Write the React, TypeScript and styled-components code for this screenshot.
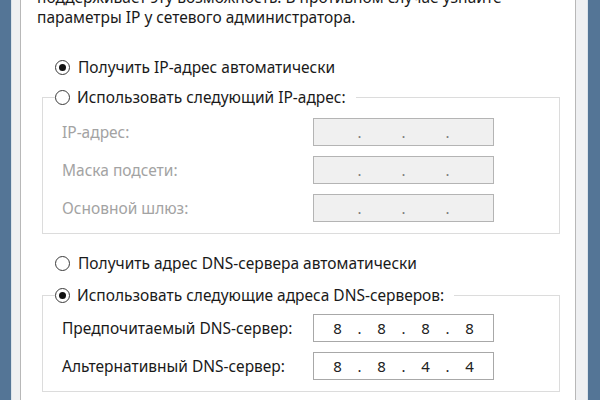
import React from "react";
import styled, { createGlobalStyle } from "styled-components";

const Global = createGlobalStyle`
  html, body { margin: 0; padding: 0; }
  body { font-family: "Noto Sans", "Open Sans", sans-serif; background: #547596; }
  * { box-sizing: border-box; }
`;

const Frame = styled.div`
  display: flex;
  width: 600px;
  height: 400px;
  overflow: hidden;
`;

const BlueEdge = styled.div<{ $w: number }>`
  width: ${(p) => p.$w}px;
  flex: none;
  background: #547596;
`;

const LightEdge = styled.div<{ $side: "left" | "right" }>`
  width: ${(p) => (p.$side === "left" ? 10 : 13)}px;
  flex: none;
  background: #eff0f2;
  ${(p) => (p.$side === "left" ? "border-right" : "border-left")}: 1px solid #b8b8b8;
  ${(p) => (p.$side === "left" ? "border-left" : "border-right")}: 1px solid #dbe3ea;
`;

const Panel = styled.div`
  flex: 1;
  background: #fff;
  padding: 0 15px 0 16px;
  display: flex;
  flex-direction: column;
  font-size: 15.5px;
  color: #1a1a1a;
`;

const Intro = styled.p`
  margin: -13px 0 0 0;
  line-height: 20px;
  white-space: nowrap;
`;

const RadioRow = styled.label<{ $mt: number }>`
  display: flex;
  align-items: center;
  gap: 8px;
  height: 18px;
  margin: ${(p) => p.$mt}px 0 0 18px;
  white-space: nowrap;
`;

const Radio = styled.span<{ $checked?: boolean }>`
  width: 15px;
  height: 15px;
  flex: none;
  border-radius: 50%;
  border: 1px solid #3a3a3a;
  background: #fff;
  display: flex;
  align-items: center;
  justify-content: center;
  &::after {
    content: "";
    width: 7px;
    height: 7px;
    border-radius: 50%;
    background: ${(p) => (p.$checked ? "#111" : "transparent")};
  }
`;

const Group = styled.fieldset<{ $mt: number; $pt: number }>`
  margin: ${(p) => p.$mt}px 0 0 5px;
  padding: ${(p) => p.$pt}px 0 11px 0;
  border: 1px solid #dcdcdc;
  display: flex;
  flex-direction: column;
  gap: 10px;
`;

const Legend = styled.legend`
  margin-left: 12px;
  padding: 0 10px 0 0;
  display: flex;
  align-items: center;
  gap: 7px;
  height: 18px;
  white-space: nowrap;
`;

const Row = styled.div<{ $disabled?: boolean }>`
  display: grid;
  grid-template-columns: 251px 181px;
  align-items: center;
  height: 28px;
  padding-left: 19px;
  color: ${(p) => (p.$disabled ? "#a3a3a3" : "#1a1a1a")};
`;

const IpBox = styled.div<{ $disabled?: boolean }>`
  height: 28px;
  border: 1px solid ${(p) => (p.$disabled ? "#b4b4b4" : "#a8a8a8")};
  background: ${(p) => (p.$disabled ? "#f0f0f0" : "#fff")};
  display: flex;
  align-items: center;
  justify-content: center;
  color: ${(p) => (p.$disabled ? "#7a7a7a" : "#222")};
  font-size: 15px;
`;

const Octet = styled.span`
  width: 36px;
  text-align: center;
`;

const Dot = styled.span`
  width: 8px;
  text-align: center;
`;

function Ip({ value, disabled }: { value?: string[]; disabled?: boolean }) {
  const parts = value ?? ["", "", "", ""];
  return (
    <IpBox $disabled={disabled}>
      {parts.map((p, i) => (
        <React.Fragment key={i}>
          {i > 0 && <Dot>.</Dot>}
          <Octet>{p}</Octet>
        </React.Fragment>
      ))}
    </IpBox>
  );
}

export default function App() {
  return (
    <>
      <Global />
      <Frame>
        <BlueEdge $w={11} />
        <LightEdge $side="left" />
        <Panel>
          <Intro>
            поддерживает эту возможность. В противном случае узнайте
            <br />
            параметры IP у сетевого администратора.
          </Intro>
          <RadioRow $mt={31}>
            <Radio $checked />
            Получить IP-адрес автоматически
          </RadioRow>
          <Group $mt={12} $pt={12}>
            <Legend>
              <Radio />
              Использовать следующий IP-адрес:
            </Legend>
            <Row $disabled>
              <span>IP-адрес:</span>
              <Ip disabled />
            </Row>
            <Row $disabled>
              <span>Маска подсети:</span>
              <Ip disabled />
            </Row>
            <Row $disabled>
              <span>Основной шлюз:</span>
              <Ip disabled />
            </Row>
          </Group>
          <RadioRow $mt={20}>
            <Radio />
            Получить адрес DNS-сервера автоматически
          </RadioRow>
          <Group $mt={14} $pt={10}>
            <Legend>
              <Radio $checked />
              Использовать следующие адреса DNS-серверов:
            </Legend>
            <Row>
              <span>Предпочитаемый DNS-сервер:</span>
              <Ip value={["8", "8", "8", "8"]} />
            </Row>
            <Row>
              <span>Альтернативный DNS-сервер:</span>
              <Ip value={["8", "8", "4", "4"]} />
            </Row>
          </Group>
        </Panel>
        <LightEdge $side="right" />
        <BlueEdge $w={12} />
      </Frame>
    </>
  );
}
